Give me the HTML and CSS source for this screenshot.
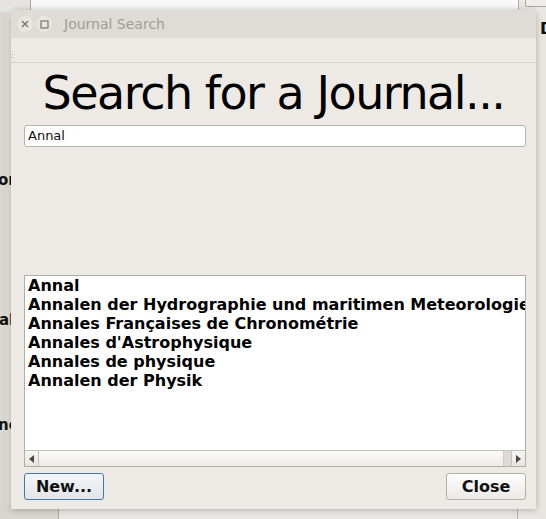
FILE: index.html
```html
<!DOCTYPE html>
<html>
<head>
<meta charset="utf-8">
<link rel="stylesheet" href="styles.css">
</head>
<body>
<div class="desktop">
  <div class="bg-top-left"></div>
  <div class="bg-top-white"></div>
  <div class="bg-top-box"></div>
  <div class="bg-left"></div>
  <div class="bg-right"></div>
  <div class="bg-bottom-left"></div>
  <div class="bg-bottom-mid"></div>
  <span class="bg-label l1">or</span>
  <span class="bg-label l2">al</span>
  <span class="bg-label l3">ne</span>
  <span class="bg-label r1">D</span>

  <div class="window">
    <div class="titlebar">
      <span class="tb-btn"><svg width="8" height="8" viewBox="0 0 8 8"><path d="M1 1L7 7M7 1L1 7" stroke="#6e6a66" stroke-width="1.2"/></svg></span>
      <span class="tb-btn"><svg width="9" height="9" viewBox="0 0 9 9"><rect x="1" y="1" width="7" height="7" fill="none" stroke="#6e6a66" stroke-width="1.1"/></svg></span>
      <span class="title">Journal Search</span>
    </div>
    <div class="toolbar"><span class="grip"></span></div>
    <div class="content">
      <h1 class="heading">Search for a Journal...</h1>
      <div class="field">Annal</div>
      <div class="spacer"></div>
      <div class="list">
        <div class="items">
          <div class="item">Annal</div>
          <div class="item">Annalen der Hydrographie und maritimen Meteorologie</div>
          <div class="item">Annales Françaises de Chronométrie</div>
          <div class="item">Annales d'Astrophysique</div>
          <div class="item">Annales de physique</div>
          <div class="item">Annalen der Physik</div>
        </div>
        <div class="hscroll">
          <span class="sb-btn"><svg width="5" height="8" viewBox="0 0 5 8"><path d="M5 0L0 4L5 8Z" fill="#4a4845"/></svg></span>
          <span class="sb-thumb"></span>
          <span class="sb-rest"></span>
          <span class="sb-btn right"><svg width="5" height="8" viewBox="0 0 5 8"><path d="M0 0L5 4L0 8Z" fill="#4a4845"/></svg></span>
        </div>
      </div>
      <div class="buttons">
        <button class="btn primary">New...</button>
        <button class="btn">Close</button>
      </div>
    </div>
  </div>
</div>
</body>
</html>
```

FILE: styles.css
```css
html, body {
  margin: 0;
  padding: 0;
}
body {
  width: 546px;
  height: 519px;
  overflow: hidden;
  font-family: "DejaVu Sans", sans-serif;
  background: #e9e7e4;
}
.desktop {
  position: relative;
  width: 546px;
  height: 519px;
  overflow: hidden;
}
.bg-top-left {
  position: absolute;
  left: 0; top: 0;
  width: 30px; height: 12px;
  background: #e6e4e0;
  border-right: 1px solid #a9a6a2;
}
.bg-top-white {
  position: absolute;
  left: 31px; top: 0;
  width: 487px; height: 12px;
  background: linear-gradient(#fbfbfb, #f0f0f0);
  border-right: 1px solid #b4b1ad;
}
.bg-top-box {
  position: absolute;
  left: 525px; top: -4px;
  width: 30px; height: 9px;
  border: 1px solid #a9a6a2;
  border-radius: 2px;
  background: #efedea;
}
.bg-left {
  position: absolute;
  left: 0; top: 12px;
  width: 11px; height: 507px;
  background: linear-gradient(90deg, #dcd9d4, #d7d4cf 40%, #e9e6e1);
}
.bg-right {
  position: absolute;
  left: 535px; top: 12px;
  width: 11px; height: 507px;
  background: #e9e6e1;
}
.bg-bottom-left {
  position: absolute;
  left: 0; top: 505px;
  width: 58px; height: 14px;
  background: #d9d6d1;
  border-right: 1px solid #aeaba6;
}
.bg-bottom-mid {
  position: absolute;
  left: 59px; top: 505px;
  width: 458px; height: 14px;
  background: #e9e7e4;
  border-right: 1px solid #b6b3ae;
}
.bg-label {
  position: absolute;
  font-weight: bold;
  font-size: 15px;
  color: #111;
  white-space: nowrap;
}
.l1 { left: -2px; top: 171px; }
.l2 { left: -1px; top: 311px; }
.l3 { left: -2px; top: 416px; }
.r1 { left: 540px; top: 19px; font-size: 16px; }

.window {
  position: absolute;
  left: 11px; top: 10px;
  width: 525px; height: 499px;
  background: #edeae5;
  border-radius: 6px 6px 0 0;
  box-shadow: 0 1px 6px rgba(0,0,0,0.25);
  display: flex;
  flex-direction: column;
  overflow: hidden;
}
.titlebar {
  height: 28px;
  background: #dfdbd6;
  display: flex;
  align-items: center;
  padding-left: 6px;
  gap: 3px;
  flex: none;
}
.tb-btn {
  width: 16px; height: 16px;
  border-radius: 50%;
  background: #e9e6e2;
  display: flex;
  align-items: center;
  justify-content: center;
}
.title {
  margin-left: 9px;
  font-size: 14px;
  color: #a19d98;
}
.toolbar {
  height: 24px;
  border-bottom: 1px solid #d6d2cd;
  flex: none;
  position: relative;
}
.grip {
  position: absolute;
  left: 1px; top: 16px;
  width: 1px; height: 4px;
  border-top: 1px solid #9a9792;
  border-bottom: 1px solid #9a9792;
  box-sizing: border-box;
}
.content {
  flex: 1;
  display: flex;
  flex-direction: column;
  padding: 2px 10px 10px 13px;
}
.heading {
  margin: 0;
  font-weight: normal;
  font-size: 46px;
  letter-spacing: -1.5px;
  line-height: 56px;
  text-align: center;
  color: #000;
  margin-left: -13px;
  margin-right: -10px;
  white-space: nowrap;
}
.field {
  margin-top: 4px;
  height: 20px;
  border: 1px solid #b5b1ab;
  border-radius: 3px;
  background: #fff;
  font-size: 13px;
  line-height: 20px;
  padding-left: 3px;
  color: #111;
}
.spacer {
  height: 128px;
  flex: none;
}
.list {
  height: 190px;
  border: 1px solid #b1ada7;
  background: #fff;
  display: flex;
  flex-direction: column;
  overflow: hidden;
}
.items {
  flex: 1;
  padding: 0 0 0 3px;
  overflow: hidden;
}
.item {
  font-weight: bold;
  font-size: 16px;
  line-height: 19px;
  white-space: nowrap;
  color: #000;
}
.hscroll {
  height: 15px;
  display: flex;
  border-top: 1px solid #c4c0bb;
  flex: none;
}
.sb-btn {
  width: 13px;
  background: linear-gradient(#f6f5f3, #e8e6e2);
  border-right: 1px solid #c4c0bb;
  display: flex;
  align-items: center;
  justify-content: center;
}
.sb-btn.right {
  border-right: none;
  border-left: 1px solid #c4c0bb;
}
.sb-thumb {
  flex: 1;
  background: linear-gradient(#fbfaf9, #eeece9);
}
.sb-rest {
  width: 7px;
  background: #dedbd7;
  border-left: 1px solid #d0ccc7;
}
.buttons {
  margin-top: 6px;
  display: flex;
  justify-content: space-between;
}
.btn {
  width: 80px;
  height: 27px;
  border: 1px solid #b3afaa;
  border-radius: 3px;
  background: linear-gradient(#fdfdfc, #ebe9e6);
  font-family: "DejaVu Sans", sans-serif;
  font-weight: bold;
  font-size: 16px;
  color: #111;
  padding: 0;
}
.btn.primary {
  border-color: #3e7aa8;
  background: linear-gradient(#f4f6f8, #e1e5e9);
}
```
